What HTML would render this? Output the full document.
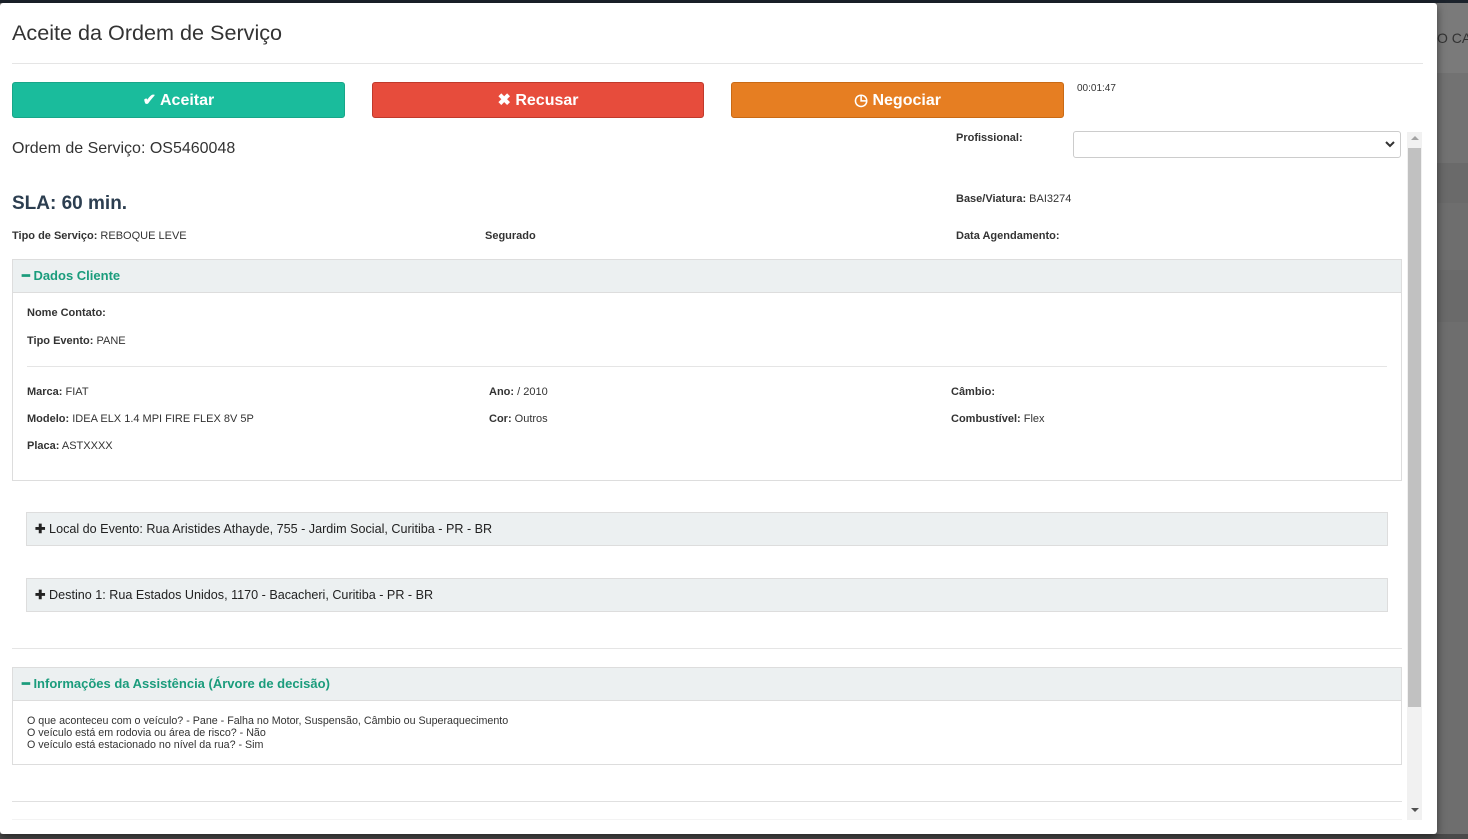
<!DOCTYPE html>
<html><head><meta charset="utf-8"><style>
*{margin:0;padding:0;box-sizing:border-box}
body{width:1468px;height:839px;overflow:hidden;background:#6e6e6e;font-family:"Liberation Sans",Arial,sans-serif;color:#333;position:relative}
.a{position:absolute}
.b{font-weight:bold}
.s{font-size:11px;color:#333}
.btn{position:absolute;top:82px;height:36px;border-radius:3px;color:#fff;font-weight:bold;font-size:16px;text-align:center;line-height:35px}
.hd{background:#ecf0f1;border:1px solid #ddd}
.g{color:#1a9c7c}
</style></head><body>
<div class="a" style="left:0;top:0;width:1468px;height:3px;background:#1b222b"></div>
<div class="a" style="left:1437px;top:3px;width:31px;height:70px;background:#7a7a7a"></div>
<div class="a" style="left:1437px;top:30px;font-size:14px;color:#333;white-space:nowrap">O CAI</div>
<div class="a" style="left:1437px;top:73px;width:31px;height:90px;background:#727272"></div>
<div class="a" style="left:1437px;top:163px;width:31px;height:40px;background:#6a6a6a"></div>
<div class="a" style="left:1437px;top:270px;width:31px;height:52px;background:#6a6a6a"></div>
<div class="a" style="left:1437px;top:834px;width:31px;height:5px;background:#444"></div>
<div class="a" style="left:0;top:834px;width:1468px;height:5px;background:#4a4a4a"></div>
<div class="a" style="left:0;top:3px;width:1437px;height:831px;background:#fff;border-radius:3px;box-shadow:0 3px 9px rgba(0,0,0,.5)"></div>

<div class="a" style="left:12px;top:20px;font-size:21.6px;color:#333">Aceite da Ordem de Serviço</div>
<div class="a" style="left:12px;top:63px;width:1411px;height:1px;background:#e5e5e5"></div>

<div class="btn" style="left:12px;width:333px;background:#1abc9c;border:1px solid #18a689">✔ Aceitar</div>
<div class="btn" style="left:372px;width:332px;background:#e74c3c;border:1px solid #c0392b">✖ Recusar</div>
<div class="btn" style="left:731px;width:333px;background:#e67e22;border:1px solid #c96a15">◷ Negociar</div>
<div class="a" style="left:1077px;top:83px;font-size:10px;color:#333">00:01:47</div>

<div class="a" style="left:12px;top:140px;font-size:16px;color:#333">Ordem de Serviço: OS5460048</div>
<div class="a b" style="left:12px;top:193px;font-size:19px;color:#2c3e50">SLA: 60 min.</div>
<div class="a s" style="left:12px;top:230px"><b>Tipo de Serviço:</b> REBOQUE LEVE</div>
<div class="a s b" style="left:485px;top:230px">Segurado</div>
<div class="a s b" style="left:956px;top:132px">Profissional:</div>
<div class="a" style="left:1073px;top:131px;width:328px;height:27px;border:1px solid #ccc;border-radius:3px"></div>
<svg class="a" style="left:1385px;top:140px" width="10" height="8"><path d="M1 2l4 4 4-4" stroke="#333" stroke-width="2" fill="none"/></svg>
<div class="a s" style="left:956px;top:193px"><b>Base/Viatura:</b> BAI3274</div>
<div class="a s b" style="left:956px;top:230px">Data Agendamento:</div>

<div class="a hd" style="left:12px;top:259px;width:1390px;height:34px"></div>
<div class="a g b" style="left:22px;top:268px;font-size:13px">━ Dados Cliente</div>
<div class="a" style="left:12px;top:292px;width:1390px;height:189px;border:1px solid #ddd;border-top:none"></div>
<div class="a s b" style="left:27px;top:307px">Nome Contato:</div>
<div class="a s" style="left:27px;top:335px"><b>Tipo Evento:</b> PANE</div>
<div class="a" style="left:27px;top:366px;width:1360px;height:1px;background:#e5e5e5"></div>
<div class="a s" style="left:27px;top:386px"><b>Marca:</b> FIAT</div>
<div class="a s" style="left:27px;top:413px"><b>Modelo:</b> IDEA ELX 1.4 MPI FIRE FLEX 8V 5P</div>
<div class="a s" style="left:27px;top:440px"><b>Placa:</b> ASTXXXX</div>
<div class="a s" style="left:489px;top:386px"><b>Ano:</b> / 2010</div>
<div class="a s" style="left:489px;top:413px"><b>Cor:</b> Outros</div>
<div class="a s b" style="left:951px;top:386px">Câmbio:</div>
<div class="a s" style="left:951px;top:413px"><b>Combustível:</b> Flex</div>

<div class="a hd" style="left:26px;top:512px;width:1362px;height:34px"></div>
<div class="a" style="left:35px;top:521px;font-size:12.6px;color:#222"><b>✚</b> Local do Evento: Rua Aristides Athayde, 755 - Jardim Social, Curitiba - PR - BR</div>
<div class="a hd" style="left:26px;top:578px;width:1362px;height:34px"></div>
<div class="a" style="left:35px;top:587px;font-size:12.6px;color:#222"><b>✚</b> Destino 1: Rua Estados Unidos, 1170 - Bacacheri, Curitiba - PR - BR</div>

<div class="a" style="left:12px;top:648px;width:1390px;height:1px;background:#e5e5e5"></div>
<div class="a hd" style="left:12px;top:667px;width:1390px;height:34px"></div>
<div class="a g b" style="left:22px;top:676px;font-size:13px">━ Informações da Assistência (Árvore de decisão)</div>
<div class="a" style="left:12px;top:700px;width:1390px;height:65px;border:1px solid #ddd;border-top:none"></div>
<div class="a" style="left:27px;top:715px;font-size:10.7px;line-height:12px;color:#333">O que aconteceu com o veículo? - Pane - Falha no Motor, Suspensão, Câmbio ou Superaquecimento<br>O veículo está em rodovia ou área de risco? - Não<br>O veículo está estacionado no nível da rua? - Sim</div>
<div class="a" style="left:12px;top:801px;width:1390px;height:1px;background:#e0e0e0"></div>
<div class="a" style="left:12px;top:819px;width:1390px;height:1px;background:#f3f3f3"></div>

<div class="a" style="left:1407px;top:132px;width:15px;height:688px;background:#f1f1f1"></div>
<div class="a" style="left:1408px;top:148px;width:13px;height:559px;background:#c1c1c1"></div>
<div class="a" style="left:1411px;top:136px;width:0;height:0;border-left:4px solid transparent;border-right:4px solid transparent;border-bottom:4px solid #a3a3a3"></div>
<div class="a" style="left:1411px;top:808px;width:0;height:0;border-left:4px solid transparent;border-right:4px solid transparent;border-top:4px solid #505050"></div>
</body></html>
